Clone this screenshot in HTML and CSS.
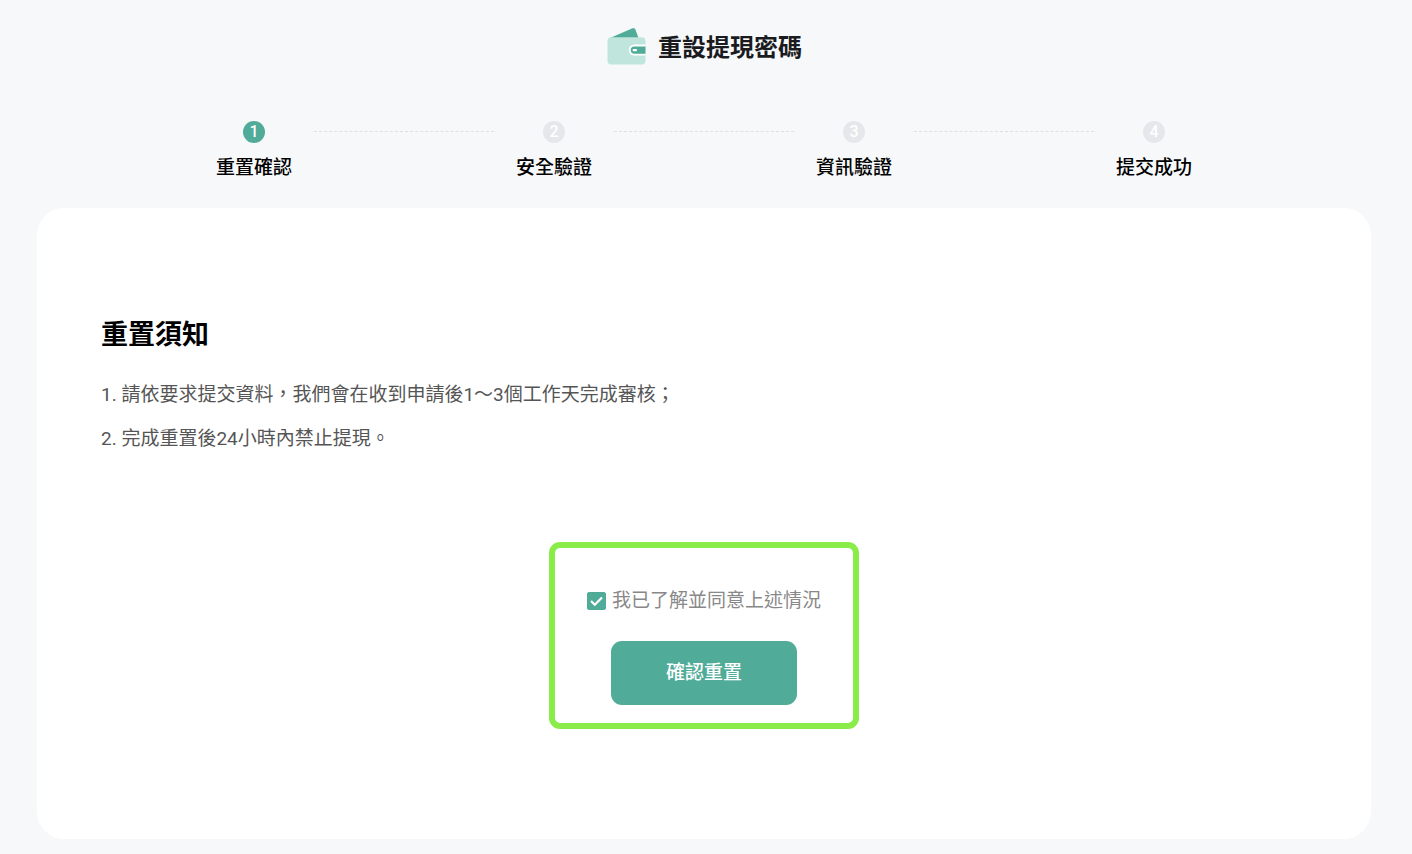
FILE: index.html
```
<!DOCTYPE html>
<html lang="zh-Hant">
<head>
<meta charset="utf-8">
<meta name="viewport" content="width=device-width, initial-scale=1">
<title>重設提現密碼</title>
<link rel="stylesheet" href="styles.css">
</head>
<body>
<div class="page">
  <header class="page-header">
    <svg class="wallet" width="40" height="40" viewBox="0 0 40 40" aria-hidden="true">
      <path fill="#50ab98" d="M4 12 26 2.4Q28.5 1.4 29.5 3.8L32.5 12Z"/>
      <rect x="1.5" y="11.2" width="38" height="27.3" rx="4" fill="#bfe5dc"/>
      <path fill="#fff" d="M39.5 18.6H28.2a5.5 5.5 0 0 0 0 11H39.5Z"/>
      <path fill="#50ab98" d="M39.5 20.4H28.4a3.7 3.7 0 0 0 0 7.4H39.5Z"/>
      <rect x="26.6" y="23" width="4.4" height="2.2" rx="1" fill="#fff"/>
    </svg>
    <h1 class="page-title">重設提現密碼</h1>
  </header>

  <ol class="steps">
    <li class="step step-active"><span class="step-number">1</span><span>重置確認</span></li>
    <li class="step-line" aria-hidden="true"></li>
    <li class="step"><span class="step-number">2</span><span>安全驗證</span></li>
    <li class="step-line" aria-hidden="true"></li>
    <li class="step"><span class="step-number">3</span><span>資訊驗證</span></li>
    <li class="step-line" aria-hidden="true"></li>
    <li class="step"><span class="step-number">4</span><span>提交成功</span></li>
  </ol>

  <main class="card">
    <h2 class="notice-title">重置須知</h2>
    <p class="notice">1. 請依要求提交資料，我們會在收到申請後1～3個工作天完成審核；</p>
    <p class="notice">2. 完成重置後24小時內禁止提現。</p>
    <form class="confirm">
      <label class="agree">
        <span class="check">
          <input class="check-input" type="checkbox" checked>
          <svg class="check-mark" viewBox="0 0 19 18" aria-hidden="true"><path d="m4 9 3.8 3.8L15 5.4" fill="none" stroke="#fff" stroke-width="2.2"/></svg>
        </span>
        <span>我已了解並同意上述情況</span>
      </label>
      <button class="submit" type="button">確認重置</button>
    </form>
  </main>
</div>
</body>
</html>
```
FILE: styles.css
```
* {
  box-sizing: border-box;
}

body {
  margin: 0;
  background: #f7f8fa;
  color: #000;
  font: 500 19px/28px Roboto, "Noto Sans CJK TC", sans-serif;
}

.page {
  padding: 26px 41px 15px 37px;
}

.page-header {
  display: flex;
  align-items: center;
  justify-content: center;
  gap: 12px;
}

.wallet {
  flex: none;
}

.page-title {
  margin: 0;
  padding-top: 4px;
  color: #1a1b1e;
  font-size: 24px;
  font-weight: 700;
  line-height: 36px;
}

.steps {
  display: flex;
  justify-content: center;
  margin: 0;
  padding: 55px 0 26px;
  list-style: none;
}

.step {
  display: flex;
  flex-direction: column;
  align-items: center;
  gap: 11px;
  width: 120px;
}

.step-number {
  width: 22px;
  height: 22px;
  border-radius: 50%;
  background: #e5e7eb;
  color: #fff;
  font-size: 16px;
  font-weight: 500;
  line-height: 22px;
  text-align: center;
}

.step-active .step-number {
  background: #50ab98;
}

.step-line {
  flex: 0 1 180px;
  height: 1px;
  margin-top: 10px;
  border-top: 1px dashed #dfe0e3;
}

.card {
  padding: 107px 64px 110px;
  border-radius: 27px;
  background: #fff;
}

.notice-title {
  margin: 0 0 26px;
  font-size: 27px;
  font-weight: 700;
  line-height: 40px;
}

.notice {
  margin: 0 0 16px;
  color: #555;
  font-weight: 400;
}

.confirm {
  display: flex;
  flex-direction: column;
  align-items: center;
  gap: 26px;
  width: fit-content;
  margin: 89px auto 0;
  padding: 39px 32px 18px;
  border: 6px solid #89ec48;
  border-radius: 11px;
}

.agree {
  display: flex;
  align-items: center;
  gap: 6px;
  color: #888;
  font-weight: 400;
}

.check {
  display: grid;
}

.check-input,
.check-mark {
  grid-area: 1 / 1;
  width: 19px;
  height: 18px;
}

.check-input {
  margin: 0;
  appearance: none;
  border: 1px solid #50ab98;
  border-radius: 2px;
}

.check-input:checked {
  background: #50ab98;
}

.check-mark {
  pointer-events: none;
}

.check-input:not(:checked) + .check-mark {
  visibility: hidden;
}

.submit {
  width: 186px;
  height: 64px;
  border: 0;
  border-radius: 11px;
  background: #50ab98;
  color: #fff;
  font: inherit;
}
```
